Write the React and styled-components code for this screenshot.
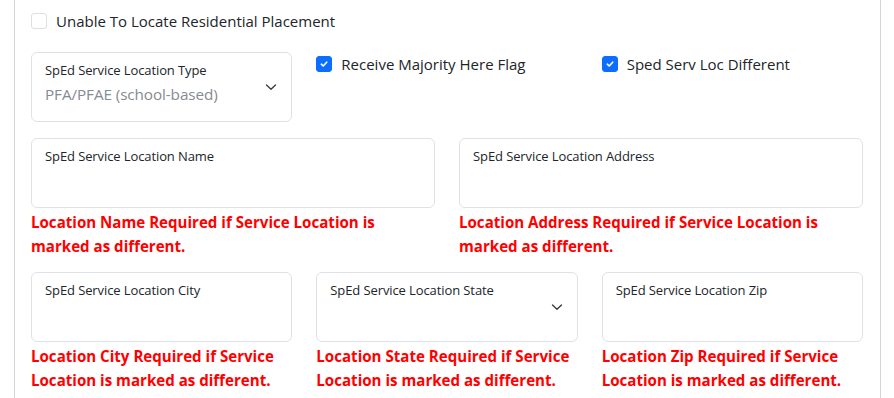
import styled, { createGlobalStyle } from 'styled-components';

const Global = createGlobalStyle`
  body { margin: 0; background: #fff; font-family: "Open Sans", "Noto Sans", Arial, sans-serif; color: #212529; }
`;

const Panel = styled.div`
  margin-left: 14px; width: 832px; padding: 9px 17px 40px 16px;
  border-left: 1px solid #d3d5d8; border-right: 1px solid #d3d5d8;
`;

const CheckRow = styled.label`
  display: flex; align-items: center; gap: 9px; height: 24px;
  font-size: 15px; color: #212529;
`;

const Box = styled.span`
  width: 14px; height: 14px; border-radius: 3px; flex: none;
  border: 1px solid ${p => (p.$on ? '#0d6efd' : '#dcdfe3')};
  background: ${p => (p.$on ? '#0d6efd' : '#fff')};
  display: flex; align-items: center; justify-content: center;
`;

const Grid = styled.div`
  display: grid; grid-template-columns: repeat(${p => p.$cols}, 1fr); column-gap: 24px;
  margin-top: ${p => p.$top}px;
`;

const Cell = styled.div`
  display: flex; flex-direction: column;
`;

const Field = styled.div`
  height: 70px; box-sizing: border-box; border: 1px solid #dee2e6; border-radius: 6px;
  padding: 7px 14px 0 13px; display: flex; align-items: ${p => (p.$select ? 'center' : 'flex-start')};
`;

const FieldText = styled.div`
  flex: 1; align-self: flex-start;
`;

const Label = styled.div`
  font-size: 13px; line-height: 20px; color: #212529; letter-spacing: -0.1px;
`;

const Value = styled.div`
  font-size: 15.3px; line-height: 24px; color: #868b91; margin-top: 2px; letter-spacing: -0.1px;
`;

const Chevron = styled.svg`
  width: 12px; height: 12px; flex: none; margin-top: -8px;
`;

const Error = styled.div`
  color: #ff0000; font-weight: 700; font-size: 15.1px; line-height: 24px;
  margin-top: 2px; padding-right: ${p => p.$pad || 0}px;
`;

const Tick = () => (
  <svg width="10" height="10" viewBox="0 0 10 10">
    <path d="M2.3 5.2 L4.2 7 L7.7 3.2" fill="none" stroke="#fff" strokeWidth="1.6" strokeLinecap="round" strokeLinejoin="round" />
  </svg>
);

const Down = () => (
  <Chevron viewBox="0 0 12 12">
    <path d="M1.5 4 L6 8.3 L10.5 4" fill="none" stroke="#343a40" strokeWidth="1.3" strokeLinecap="round" strokeLinejoin="round" />
  </Chevron>
);

const Check = ({ on, children }) => (
  <CheckRow>
    <Box $on={on}>{on && <Tick />}</Box>
    {children}
  </CheckRow>
);

const Input = ({ label, error, select, value, wide }) => (
  <Cell>
    <Field $select={select}>
      <FieldText>
        <Label>{label}</Label>
        {value && <Value>{value}</Value>}
      </FieldText>
      {select && <Down />}
    </Field>
    {error && <Error $pad={wide ? 14 : 0}>{error}</Error>}
  </Cell>
);

export default function App() {
  return (
    <>
      <Global />
      <Panel>
        <Check>Unable To Locate Residential Placement</Check>
        <Grid $cols={3} $top={19}>
          <Input select label="SpEd Service Location Type" value="PFA/PFAE (school-based)" />
          <Check on>Receive Majority Here Flag</Check>
          <Check on>Sped Serv Loc Different</Check>
        </Grid>
        <Grid $cols={2} $top={16}>
          <Input wide label="SpEd Service Location Name" error="Location Name Required if Service Location is marked as different." />
          <Input wide label="SpEd Service Location Address" error="Location Address Required if Service Location is marked as different." />
        </Grid>
        <Grid $cols={3} $top={14}>
          <Input label="SpEd Service Location City" error="Location City Required if Service Location is marked as different." />
          <Input select label="SpEd Service Location State" error="Location State Required if Service Location is marked as different." />
          <Input label="SpEd Service Location Zip" error="Location Zip Required if Service Location is marked as different." />
        </Grid>
      </Panel>
    </>
  );
}
